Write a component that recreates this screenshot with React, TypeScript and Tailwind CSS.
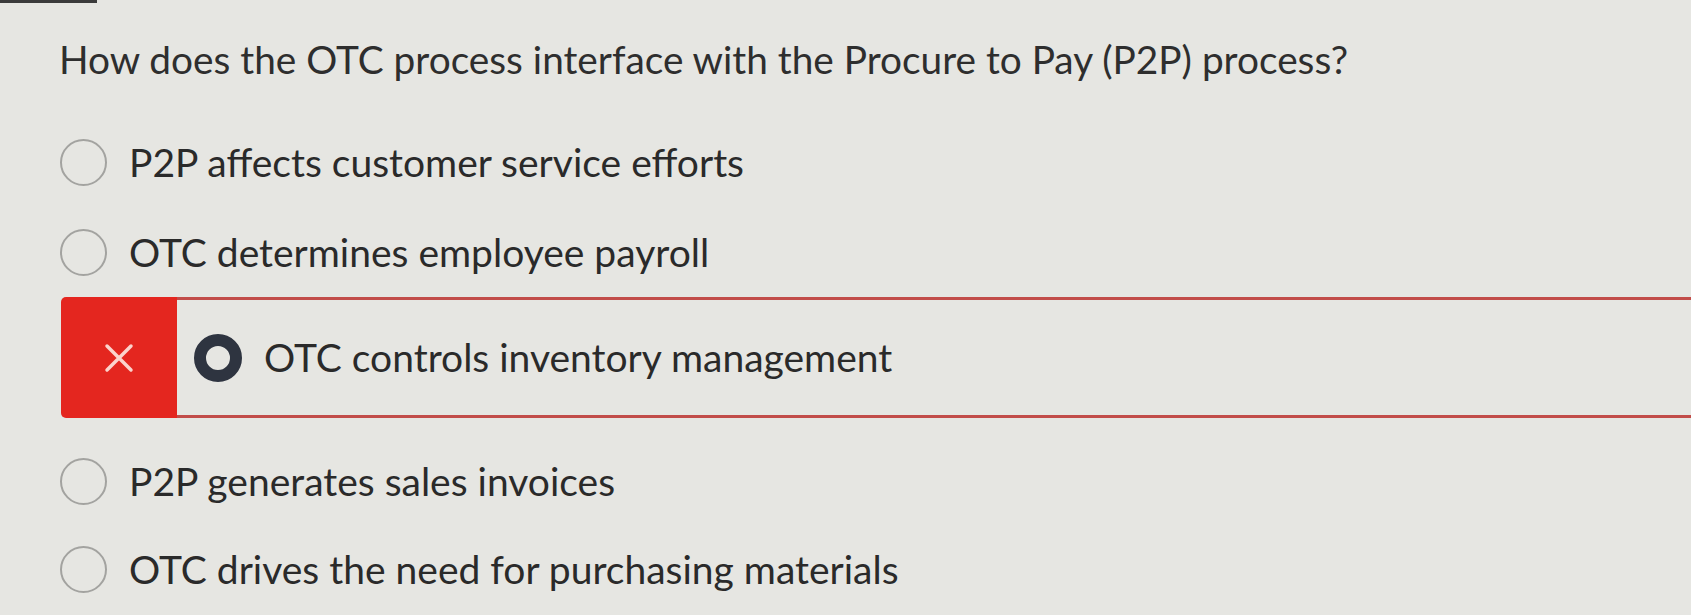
import React from 'react';

const options = [
    { id: 'a', label: 'P2P affects customer service efforts' },
    { id: 'b', label: 'OTC determines employee payroll' },
    { id: 'c', label: 'OTC controls inventory management', selected: true },
    { id: 'd', label: 'P2P generates sales invoices' },
    { id: 'e', label: 'OTC drives the need for purchasing materials' },
];

const Radio = () => (
    <span className="block w-[47px] h-[47px] shrink-0 rounded-full border-2 border-[#a3a3a0]" />
);

const WrongMark = () => (
    <svg width="30" height="30" viewBox="0 0 30 30" fill="none">
        <path d="M3 3 L27 27 M27 3 L3 27" stroke="#fbd3cc" strokeWidth="3.5" strokeLinecap="round" />
    </svg>
);

const App = () => {
    return (
        <div className="w-full h-[615px] overflow-hidden bg-[#e6e6e2] text-[#2a2a2a] font-['Lato','Liberation_Sans',sans-serif]">
            <div className="w-[97px] h-[3px] bg-[#3b3b3b]" />

            {/* Question */}
            <h1 className="mt-[32px] pl-[59px] text-[38.8px] leading-[48px] font-normal text-[#2e2e2e]">
                How does the OTC process interface with the Procure to Pay (P2P) process?
            </h1>

            {/* Answers */}
            <div className="mt-[34px]">
                {options.map((opt, i) =>
                    opt.selected ? (
                        <div key={opt.id} className="flex h-[121px] ml-[61px]">
                            <div className="w-[116px] shrink-0 flex items-center justify-center rounded-l-[5px] bg-[#e4261f]">
                                <WrongMark />
                            </div>
                            <div className="flex-1 flex items-center gap-[22px] pl-[17px] border-y-[3px] border-[#c24d49]">
                                <span className="block w-[48px] h-[48px] shrink-0 rounded-full border-[12px] border-[#2e3440]" />
                                <span className="text-[39px] leading-none">{opt.label}</span>
                            </div>
                        </div>
                    ) : (
                        <div
                            key={opt.id}
                            className={`flex items-center gap-[22px] pl-[60px] ${i === 3 ? 'mt-[18px] h-[90px]' : i === 4 ? 'h-[86px]' : 'h-[90px]'}`}
                        >
                            <Radio />
                            <span className="text-[39px] leading-none">{opt.label}</span>
                        </div>
                    )
                )}
            </div>
        </div>
    );
};

export default App;
